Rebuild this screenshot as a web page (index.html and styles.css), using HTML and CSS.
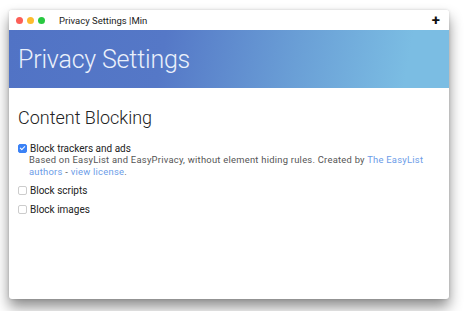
FILE: index.html
```html
<!DOCTYPE html>
<html lang="en">
<head>
    <meta charset="UTF-8">
    <title>Privacy Settings</title>
    <link rel="stylesheet" href="styles.css">
</head>
<body>
    <div class="window">
        <div class="titlebar">
            <div class="lights">
                <span class="light red"></span>
                <span class="light yellow"></span>
                <span class="light green"></span>
            </div>
            <div class="title">Privacy Settings |Min</div>
            <div class="plus">+</div>
        </div>

        <div class="header">
            <h1>Privacy Settings</h1>
        </div>

        <div class="content">
            <h2>Content Blocking</h2>

            <div class="setting">
                <label class="option"><span class="box checked"></span>Block trackers and ads</label>
                <div class="description">
                    Based on EasyList and EasyPrivacy, without element hiding rules. Created by <a href="#authors">The EasyList</a>
                    <a href="#authors">authors</a> - <a href="#license">view license</a>.
                </div>
            </div>

            <div class="setting">
                <label class="option"><span class="box"></span>Block scripts</label>
            </div>

            <div class="setting">
                <label class="option"><span class="box"></span>Block images</label>
            </div>
        </div>
    </div>
</body>
</html>
```

FILE: styles.css
```css
body {
    margin: 0;
    padding: 10px 15px 12px 9px;
    background: #ffffff;
    font-family: 'Roboto', 'Liberation Sans', sans-serif;
    color: #333;
}

.window {
    width: 440px;
    height: 289px;
    background: white;
    box-shadow: 0 8px 14px rgba(0, 0, 0, 0.45), 0 0 3px rgba(0, 0, 0, 0.15);
    border-radius: 3px;
    overflow: hidden;
}

.titlebar {
    height: 20px;
    display: flex;
    align-items: center;
    padding: 0 9px 0 7px;
    background: #fff;
}

.lights {
    display: flex;
    gap: 4px;
}

.light {
    width: 7px;
    height: 7px;
    border-radius: 50%;
}

.red { background: #fc5f57; }
.yellow { background: #fdbc2e; }
.green { background: #28c840; }

.title {
    margin-left: 14px;
    font-size: 9.5px;
    color: #222;
    flex: 1;
}

.plus {
    font-size: 15px;
    font-weight: 700;
    color: #111;
    line-height: 1;
}

.header {
    height: 58px;
    background: linear-gradient(100deg, #5173c5 0%, #5578c7 35%, #6a9fd6 65%, #7bbde3 90%);
    display: flex;
    align-items: center;
    padding-left: 9px;
}

.header h1 {
    margin: 0;
    font-size: 25px;
    font-weight: 300;
    color: #eaf0fb;
    letter-spacing: -0.2px;
}

.content {
    padding: 19px 9px 0;
}

.content h2 {
    margin: 0 0 15px;
    font-size: 18px;
    font-weight: 300;
    color: #222;
}

.setting {
    margin-bottom: 8px;
}

.option {
    display: flex;
    align-items: center;
    font-size: 10px;
    color: #222;
}

.box {
    width: 7px;
    height: 7px;
    border: 1px solid #ccc;
    border-radius: 2px;
    margin-right: 3px;
    background: white;
}

.box.checked {
    background: #3b82f6;
    border-color: #3b82f6;
    position: relative;
}

.box.checked::after {
    content: '';
    position: absolute;
    left: 2px;
    top: 0px;
    width: 2px;
    height: 4px;
    border: solid white;
    border-width: 0 1px 1px 0;
    transform: rotate(45deg);
}

.description {
    margin-left: 11px;
    font-size: 9.4px;
    letter-spacing: 0.25px;
    line-height: 11.5px;
    color: #555;
}

.description a {
    color: #6b9ce8;
    text-decoration: none;
}
```
